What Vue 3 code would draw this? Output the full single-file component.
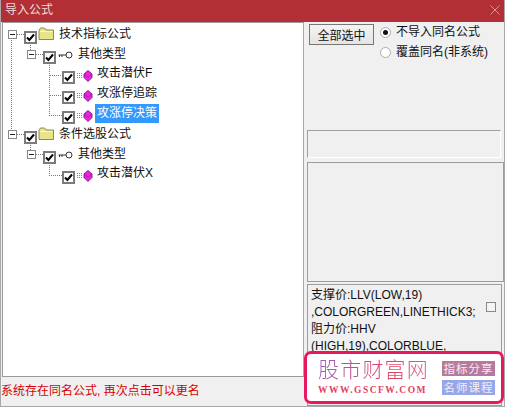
<script setup>
const rows = [
  { level: 0, label: '技术指标公式', icon: 'folder', expander: true },
  { level: 1, label: '其他类型', icon: 'key', expander: true },
  { level: 2, label: '攻击潜伏F', icon: 'gem' },
  { level: 2, label: '攻涨停追踪', icon: 'gem' },
  { level: 2, label: '攻涨停决策', icon: 'gem', selected: true },
  { level: 0, label: '条件选股公式', icon: 'folder', expander: true },
  { level: 1, label: '其他类型', icon: 'key', expander: true },
  { level: 2, label: '攻击潜伏X', icon: 'gem' },
]
</script>

<template>
  <div class="window">
    <header class="titlebar">
      <span class="title">导入公式</span>
      <svg class="close" width="10" height="10" viewBox="0 0 10 10"><path d="M0.5 0.5L9.5 9.5M9.5 0.5L0.5 9.5" stroke="#d9a0a3" fill="none" stroke-width="0.9"/></svg>
    </header>
    <main class="content">
      <section class="left">
        <div class="tree">
          <svg class="lines" width="100" height="170" viewBox="0 0 100 170">
            <g stroke="#777" stroke-dasharray="1 1" fill="none" shape-rendering="crispEdges">
              <path d="M11.5 15V107" />
              <path d="M17 11.5H24M17 111.5H24" />
              <path d="M30.5 20V29M30.5 120V129" />
              <path d="M36 31.5H43M36 131.5H43" />
              <path d="M49.5 40V92.5H62M49.5 52.5H62M49.5 72.5H62" />
              <path d="M49.5 140V152.5H62" />
            </g>
          </svg>
          <div v-for="(r, i) in rows" :key="i" class="row" :class="'lv' + r.level">
            <span v-if="r.expander" class="expander"><i></i></span>
            <span class="check">
              <svg width="9" height="9" viewBox="0 0 9 9"><path d="M1 4.5L3.4 7L8 1.5" stroke="#000" stroke-width="2" fill="none"/></svg>
            </span>
            <svg v-if="r.icon === 'folder'" class="ico folder" width="17" height="14" viewBox="0 0 17 14">
              <path d="M1 3.5V12.5H15.5V3H8L6.5 1H2.5Z" fill="#e8e48c" stroke="#8a8a50"/>
              <path d="M2 4.5H14.5" stroke="#fbf8c8"/>
            </svg>
            <svg v-else-if="r.icon === 'key'" class="ico key" width="15" height="8" viewBox="0 0 15 8">
              <circle cx="11" cy="4" r="3" fill="#fff" stroke="#333"/>
              <path d="M0.5 4H8M1.5 4V6M4 4V6" stroke="#333" fill="none"/>
            </svg>
            <svg v-else class="ico gem" width="16" height="12" viewBox="0 0 16 12">
              <path d="M0 3.5H6M0 5.5H6M0 7.5H6" stroke="#888" fill="none" stroke-dasharray="1 1"/>
              <path d="M11 0.5L15 4V7.5L11 11.5L7 7.5V4Z" fill="#ee22dd" stroke="#6a1a90" stroke-width="0.9"/>
              <path d="M7.5 4.5L11 7L14.5 4.5" stroke="#8a1aa0" fill="none" stroke-width="0.6"/>
            </svg>
            <span class="label" :class="{ selected: r.selected }">{{ r.label }}</span>
          </div>
        </div>
        <footer class="status">系统存在同名公式, 再次点击可以更名</footer>
      </section>

      <aside class="right">
        <div class="controls">
          <button class="btn" type="button">全部选中</button>
          <div class="radios">
            <label class="radio"><span class="dot on"></span>不导入同名公式</label>
            <label class="radio"><span class="dot"></span>覆盖同名(非系统)</label>
          </div>
        </div>
        <div class="group"></div>
        <div class="preview"></div>
        <div class="desc">
          <p>支撑价:LLV(LOW,19)<br>,COLORGREEN,LINETHICK3;<br>阻力价:HHV<br>(HIGH,19),COLORBLUE,</p>
          <span class="desc-check"></span>
        </div>
      </aside>
    </main>

    <div class="brand">
      <div class="brand-text">
        <div class="brand-name">股市财富网</div>
        <div class="brand-url">WWW.GSCFW.COM</div>
      </div>
      <div class="tags">
        <span class="tag plum">指标分享</span>
        <span class="tag blue">名师课程</span>
      </div>
    </div>
  </div>
</template>

<style>
html, body { margin: 0; padding: 0; background: #f0f0f0; }
</style>

<style scoped>
.window {
  position: relative;
  width: 505px;
  height: 407px;
  box-sizing: border-box;
  display: flex;
  flex-direction: column;
  background: #f0f0f0;
  border: 1px solid #a8a8a8;
  border-top: 0;
  overflow: hidden;
  font-family: "Liberation Sans", "Noto Sans CJK SC", sans-serif;
  font-size: 12px;
  color: #111;
}
.titlebar {
  height: 22px;
  margin: 0 -1px;
  flex: none;
  background: #b22f35;
  display: flex;
  align-items: center;
  justify-content: space-between;
  padding: 0 4px 2px 5px;
  box-sizing: border-box;
}
.title { color: #f0dcdc; line-height: 20px; }
.close { margin-right: 1px; }
.content { flex: 1; display: flex; min-height: 0; }
.left { width: 302px; display: flex; flex-direction: column; padding-left: 1px; flex: none; }
.tree {
  position: relative;
  height: 355px;
  box-sizing: border-box;
  background: #fff;
  border: 1px solid #9a9a9a;
  border-right-color: #a8a8a8;
  padding-top: 2px;
}
.lines { position: absolute; left: -3px; top: 0; }
.row {
  position: relative;
  height: 20px;
  display: flex;
  align-items: center;
}
.lv0 { padding-left: 5px; }
.lv1 { padding-left: 24px; }
.lv2 { padding-left: 59px; }
.expander {
  width: 9px;
  height: 9px;
  box-sizing: border-box;
  border: 1px solid #888;
  background: #fff;
  display: flex;
  align-items: center;
  justify-content: center;
  margin-right: 7px;
  margin-top: -2px;
}
.expander i { width: 5px; height: 1px; background: #222; }
.check {
  width: 13px;
  height: 13px;
  flex: none;
  box-sizing: border-box;
  border: 2px solid #7b7b7b;
  background: #fff;
  display: flex;
  align-items: center;
  justify-content: center;
  margin-top: 4px;
}
.ico { flex: none; }
.folder { margin: -3px 0 0 1px; }
.key { margin: -1px 0 0 2px; }
.gem { margin: 1px 0 0 2px; }
.label { line-height: 19px; padding: 0 2px; margin-left: 3px; white-space: nowrap; }
.lv2 .label { margin-left: 2px; margin-top: -3px; }
.lv0 .label { margin-left: 2px; margin-top: -2px; }
.lv1 .label { margin-left: 3px; margin-top: -2px; }
.label.selected { background: #3399ff; color: #fff; }
.status { height: 29px; color: #d40000; line-height: 28px; white-space: nowrap; margin-left: -1px; }
.right { flex: 1; padding: 2px 0 0 3px; min-width: 0; display: flex; flex-direction: column; }
.controls { display: flex; height: 106px; flex: none; padding-left: 2px; gap: 6px; }
.btn {
  width: 65px;
  height: 21px;
  box-sizing: border-box;
  padding: 0;
  font: inherit;
  color: #111;
  background: linear-gradient(#f4f4f4, #e4e4e4);
  border: 1px solid #777;
  border-radius: 0;
}
.radios { display: flex; flex-direction: column; gap: 3px; }
.radio { display: flex; align-items: center; height: 17px; line-height: 17px; white-space: nowrap; }
.dot {
  width: 9px;
  height: 9px;
  border-radius: 50%;
  background: #fff;
  border: 1px solid #aaa;
  margin-right: 5px;
  position: relative;
}
.dot.on::after {
  content: "";
  position: absolute;
  left: 2px;
  top: 2px;
  width: 5px;
  height: 5px;
  border-radius: 50%;
  background: #111;
}
.group {
  height: 28px;
  width: 194px;
  flex: none;
  box-sizing: border-box;
  border: 1px solid #fff;
  border-top-color: #a0a0a0;
  border-left-color: #a0a0a0;
}
.preview {
  height: 120px;
  width: 197px;
  flex: none;
  margin-top: 4px;
  box-sizing: border-box;
  border: 1px solid #9c9c9c;
  background: #f0f0f0;
}
.desc {
  margin-top: 2px;
  width: 195px;
  flex: 1;
  box-sizing: border-box;
  border: 1px solid #9c9c9c;
  display: flex;
  overflow: hidden;
  padding: 2px 0 0 3px;
  position: relative;
}
.desc p {
  margin: 0;
  line-height: 17px;
  white-space: nowrap;
}
.desc-check {
  position: absolute;
  right: 5px;
  top: 17px;
  width: 8px;
  height: 8px;
  border: 1px solid #888;
  background: #f4f4f4;
}
.brand {
  position: absolute;
  left: 303px;
  top: 351px;
  width: 200px;
  height: 53px;
  box-sizing: border-box;
  background: #fff;
  border: 3px solid #e8185f;
  border-radius: 7px;
  display: flex;
  align-items: center;
  padding-left: 11px;
}
.brand-text { width: 120px; flex: none; margin-top: -6px; }
.brand-name {
  font-size: 21px;
  line-height: 31px;
  font-weight: 300;
  font-family: "Noto Sans CJK SC", sans-serif;
  letter-spacing: 1.2px;
  background: linear-gradient(90deg, #9b5fc0, #e2405f 60%, #d86a90);
  -webkit-background-clip: text;
  background-clip: text;
  color: transparent;
  white-space: nowrap;
}
.brand-url {
  font-family: "Liberation Serif", serif;
  font-size: 9.5px;
  font-weight: 700;
  letter-spacing: 1.5px;
  line-height: 12px;
  color: #e2405f;
  white-space: nowrap;
}
.tags { display: flex; flex-direction: column; gap: 4px; margin-left: 4px; }
.tag {
  width: 53px;
  height: 15px;
  line-height: 15px;
  text-align: center;
  color: #f4eef4;
  font-size: 11.5px;
  font-family: "Noto Sans CJK SC", sans-serif;
  letter-spacing: 1px;
  white-space: nowrap;
}
.plum { background: #b67a9e; }
.blue { background: #97a6e8; }
</style>
